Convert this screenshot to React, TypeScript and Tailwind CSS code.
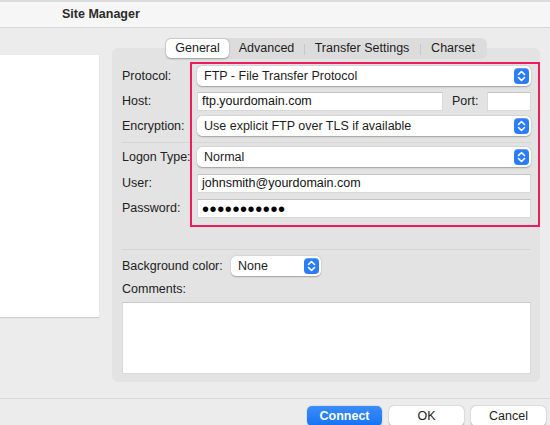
import React from 'react';

const font = { fontFamily: '"Liberation Sans", Arial, sans-serif' };

const Stepper = () => (
  <span className="flex h-[16px] w-[15px] items-center justify-center rounded-[4px] bg-[#2b7df7] shadow-[inset_0_1px_0_rgba(255,255,255,0.25)]">
    <svg width="9" height="12" viewBox="0 0 9 12" fill="none" stroke="white" strokeWidth={1.6} strokeLinecap="round" strokeLinejoin="round">
      <path d="M1.5 4.5L4.5 1.5L7.5 4.5" />
      <path d="M1.5 7.5L4.5 10.5L7.5 7.5" />
    </svg>
  </span>
);

const Select = ({ value, className = '' }: { value: string; className?: string }) => (
  <div
    className={`flex h-[20px] items-center justify-between rounded-[5px] bg-white pl-[7px] pr-[2px] text-[12.5px] text-[#1d1d1d] shadow-[0_0.5px_1.5px_rgba(0,0,0,0.3)] ${className}`}
  >
    <span>{value}</span>
    <Stepper />
  </div>
);

const Input = ({ children, className = '' }: { children?: React.ReactNode; className?: string }) => (
  <div
    className={`flex h-[19px] items-center bg-white pl-[4px] text-[12.5px] text-[#111] border border-[#d9d9d9] border-t-[#c4c4c4] ${className}`}
  >
    {children}
  </div>
);

const Label = ({ children }: { children: React.ReactNode }) => (
  <span className="w-[75px] shrink-0 text-[12.5px] text-[#222]">{children}</span>
);

const Tab = ({ label, active, divider, w }: { label: string; active?: boolean; divider?: boolean; w: string }) => (
  <div className={`relative flex h-full items-center justify-center ${w}`}>
    {divider && <span className="absolute left-0 top-[5px] h-[11px] w-px bg-[#c8c8c8]" />}
    {active ? (
      <span className="flex h-full w-full items-center justify-center rounded-[5px] bg-white text-[12.5px] text-[#1d1d1d] shadow-[0_0.5px_2px_rgba(0,0,0,0.3)]">
        {label}
      </span>
    ) : (
      <span className="text-[12.5px] text-[#1d1d1d]">{label}</span>
    )}
  </div>
);

const Button = ({ label, primary }: { label: string; primary?: boolean }) => (
  <div
    className={`flex h-[20px] w-[75px] items-center justify-center rounded-[5px] text-[12.5px] ${
      primary
        ? 'bg-gradient-to-b from-[#3a8cf9] to-[#1273f4] font-semibold text-white shadow-[0_0.5px_1.5px_rgba(0,0,0,0.3)]'
        : 'bg-white text-[#1d1d1d] shadow-[0_0.5px_1.5px_rgba(0,0,0,0.35)]'
    }`}
  >
    {label}
  </div>
);

export default function App() {
  return (
    <div className="flex h-[425px] w-[550px] flex-col overflow-hidden bg-[#ececec]" style={font}>
      <div className="flex h-[28px] shrink-0 items-center border-t-2 border-b border-t-[#dcdcdc] border-b-[#d8d8d8] bg-[#f6f6f6] pl-[62px]">
        <span className="text-[12.5px] font-bold text-[#2b2b2b]">Site Manager</span>
      </div>

      <div className="flex flex-1">
        <div className="mt-[27px] h-[262px] w-[99px] shrink-0 bg-white shadow-[0_1px_1px_rgba(0,0,0,0.12)]" />

        <div className="ml-[13px] mt-[10px] flex w-[428px] flex-col items-center">
          <div className="relative z-10 mb-[-11px] flex h-[21px] items-center rounded-[6px] bg-[#dcdcdc] p-[1px]">
            <Tab label="General" active w="w-[63px]" />
            <Tab label="Advanced" w="w-[75px]" />
            <Tab label="Transfer Settings" divider w="w-[116px]" />
            <Tab label="Charset" divider w="w-[66px]" />
          </div>

          <div className="relative flex h-[334px] w-full flex-col rounded-[6px] bg-[#e3e3e3] pl-[10px] pr-[9px] pt-[18px] pb-[8px]">
            <div className="flex items-center">
              <Label>Protocol:</Label>
              <Select value="FTP - File Transfer Protocol" className="flex-1" />
            </div>
            <div className="mt-[6px] flex items-center">
              <Label>Host:</Label>
              <Input className="w-[246px]">ftp.yourdomain.com</Input>
              <span className="ml-[9px] w-[35px] text-[12.5px] text-[#222]">Port:</span>
              <Input className="flex-1" />
            </div>
            <div className="mt-[5px] flex items-center">
              <Label>Encryption:</Label>
              <Select value="Use explicit FTP over TLS if available" className="flex-1" />
            </div>
            <div className="mt-[6px] h-px bg-[#d5d5d5]" />
            <div className="mt-[4px] flex items-center">
              <Label>Logon Type:</Label>
              <Select value="Normal" className="flex-1" />
            </div>
            <div className="mt-[7px] flex items-center">
              <Label>User:</Label>
              <Input className="flex-1">johnsmith@yourdomain.com</Input>
            </div>
            <div className="mt-[6px] flex items-center">
              <Label>Password:</Label>
              <Input className="flex-1">
                <span className="text-[20px] leading-none tracking-[0.6px] text-black">•••••••••••</span>
              </Input>
            </div>
            <div className="mt-[31px] h-px bg-[#d5d5d5]" />
            <div className="mt-[6px] flex items-center">
              <span className="w-[109px] shrink-0 text-[12.5px] text-[#222]">Background color:</span>
              <Select value="None" className="w-[90px]" />
            </div>
            <div className="mt-[5px] h-[16px] text-[12.5px] leading-[16px] text-[#222]">Comments:</div>
            <div className="mt-[5px] h-[72px] border border-[#d9d9d9] border-t-[#c9c9c9] bg-white" />

            <div className="pointer-events-none absolute left-[78px] top-[14px] h-[165px] w-[350px] border-2 border-[#ee1c5e]" />
          </div>
        </div>
      </div>

      <div className="flex h-[27px] shrink-0 justify-end gap-[7px] border-t border-[#dadada] pr-[4px] pt-[7px]">
        <Button label="Connect" primary />
        <Button label="OK" />
        <Button label="Cancel" />
      </div>
    </div>
  );
}
